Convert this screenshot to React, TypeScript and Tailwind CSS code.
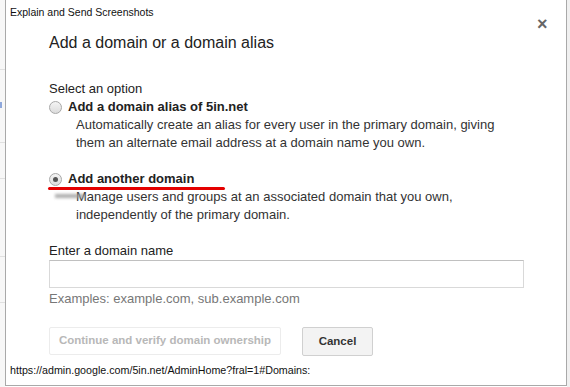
import React from "react";

function Radio({ checked }: { checked?: boolean }) {
  return (
    <span className="w-[13px] h-[13px] rounded-full border border-[#a8a8a8] bg-gradient-to-b from-[#f4f4f4] to-[#dcdcdc] flex items-center justify-center shrink-0">
      {checked && <span className="w-[5px] h-[5px] rounded-full bg-[#555]" />}
    </span>
  );
}

export default function App() {
  return (
    <div className="relative w-[570px] h-[387px] bg-white overflow-hidden flex text-[#222] font-['Liberation_Sans',Arial,sans-serif]">
      {/* page behind the dialog */}
      <div className="w-[5px] shrink-0 flex flex-col bg-[#f7f7f7]">
        <div className="h-[70px] border-b border-[#e0e0e0]" />
        <div className="h-[73px] border-b border-[#e0e0e0] relative">
          <span className="absolute left-0 top-[32px] w-[2px] h-[6px] bg-[#8fa8dc]" />
        </div>
        <div className="h-[36px] border-b border-[#e0e0e0]" />
        <div className="h-[78px] border-b border-[#e0e0e0]" />
        <div className="h-[46px] border-b border-[#e0e0e0]" />
      </div>

      <div className="relative w-[562px] h-[386px] shrink-0 border-l border-r border-b border-[#a9a9a9] flex flex-col">
        <div className="pt-[6px] pl-[4px] text-[10.5px] leading-[13px] text-[#111]">
          Explain and Send Screenshots
        </div>
        <button className="absolute left-[531px] top-[15px] text-[#666] text-[18px] leading-none font-bold">
          ×
        </button>

        <div className="pl-[43px] flex flex-col">
          <h1 className="mt-[14px] text-[16px] leading-[20px] text-[#222]">
            Add a domain or a domain alias
          </h1>

          <div className="mt-[27px] text-[13px] leading-[18px] text-[#222]">Select an option</div>

          <div className="flex items-center gap-[6px] text-[13px] leading-[18px]">
            <Radio />
            <span className="font-bold text-[#222]">Add a domain alias of 5in.net</span>
          </div>
          <div className="pl-[27px] text-[13px] leading-[18px] text-[#333]">
            Automatically create an alias for every user in the primary domain, giving
            <br />
            them an alternate email address at a domain name you own.
          </div>

          <div className="relative mt-[18px] flex items-center gap-[6px] text-[13px] leading-[18px]">
            <Radio checked />
            <span className="font-bold text-[#222]">Add another domain</span>
            <span className="absolute left-[-1px] top-[17px] w-[177px] h-[3px] bg-[#e40000] rounded-full" />
            <span className="absolute left-[6px] top-[24px] w-[30px] h-[4px] bg-[#9a9a9a] blur-[1.5px] opacity-80" />
          </div>
          <div className="pl-[27px] text-[13px] leading-[18px] text-[#333]">
            Manage users and groups at an associated domain that you own,
            <br />
            independently of the primary domain.
          </div>

          <div className="mt-[18px] text-[13px] leading-[18px] text-[#222]">Enter a domain name</div>
          <input
            className="w-[475px] h-[28px] border border-[#d9d9d9] border-t-[#c0c0c0] bg-white outline-none"
            readOnly
          />
          <div className="mt-[2px] text-[13px] leading-[18px] text-[#777]">
            Examples: example.com, sub.example.com
          </div>

          <div className="mt-[19px] flex gap-[21px]">
            <button className="w-[232px] h-[28px] border border-[#ececec] rounded-[2px] text-[11.5px] font-bold text-[#b8b8b8] bg-white">
              Continue and verify domain ownership
            </button>
            <button className="w-[71px] h-[29px] border border-[#d0d0d0] rounded-[2px] text-[11.5px] font-bold text-[#333] bg-[#f3f3f3]">
              Cancel
            </button>
          </div>
        </div>

        <div className="mt-[8px] pl-[4px] text-[10.7px] leading-[13px] text-[#111]">
          https://admin.google.com/5in.net/AdminHome?fral=1#Domains:
        </div>
      </div>
      <div className="flex-1 bg-[#f0f0f0]" />
    </div>
  );
}
